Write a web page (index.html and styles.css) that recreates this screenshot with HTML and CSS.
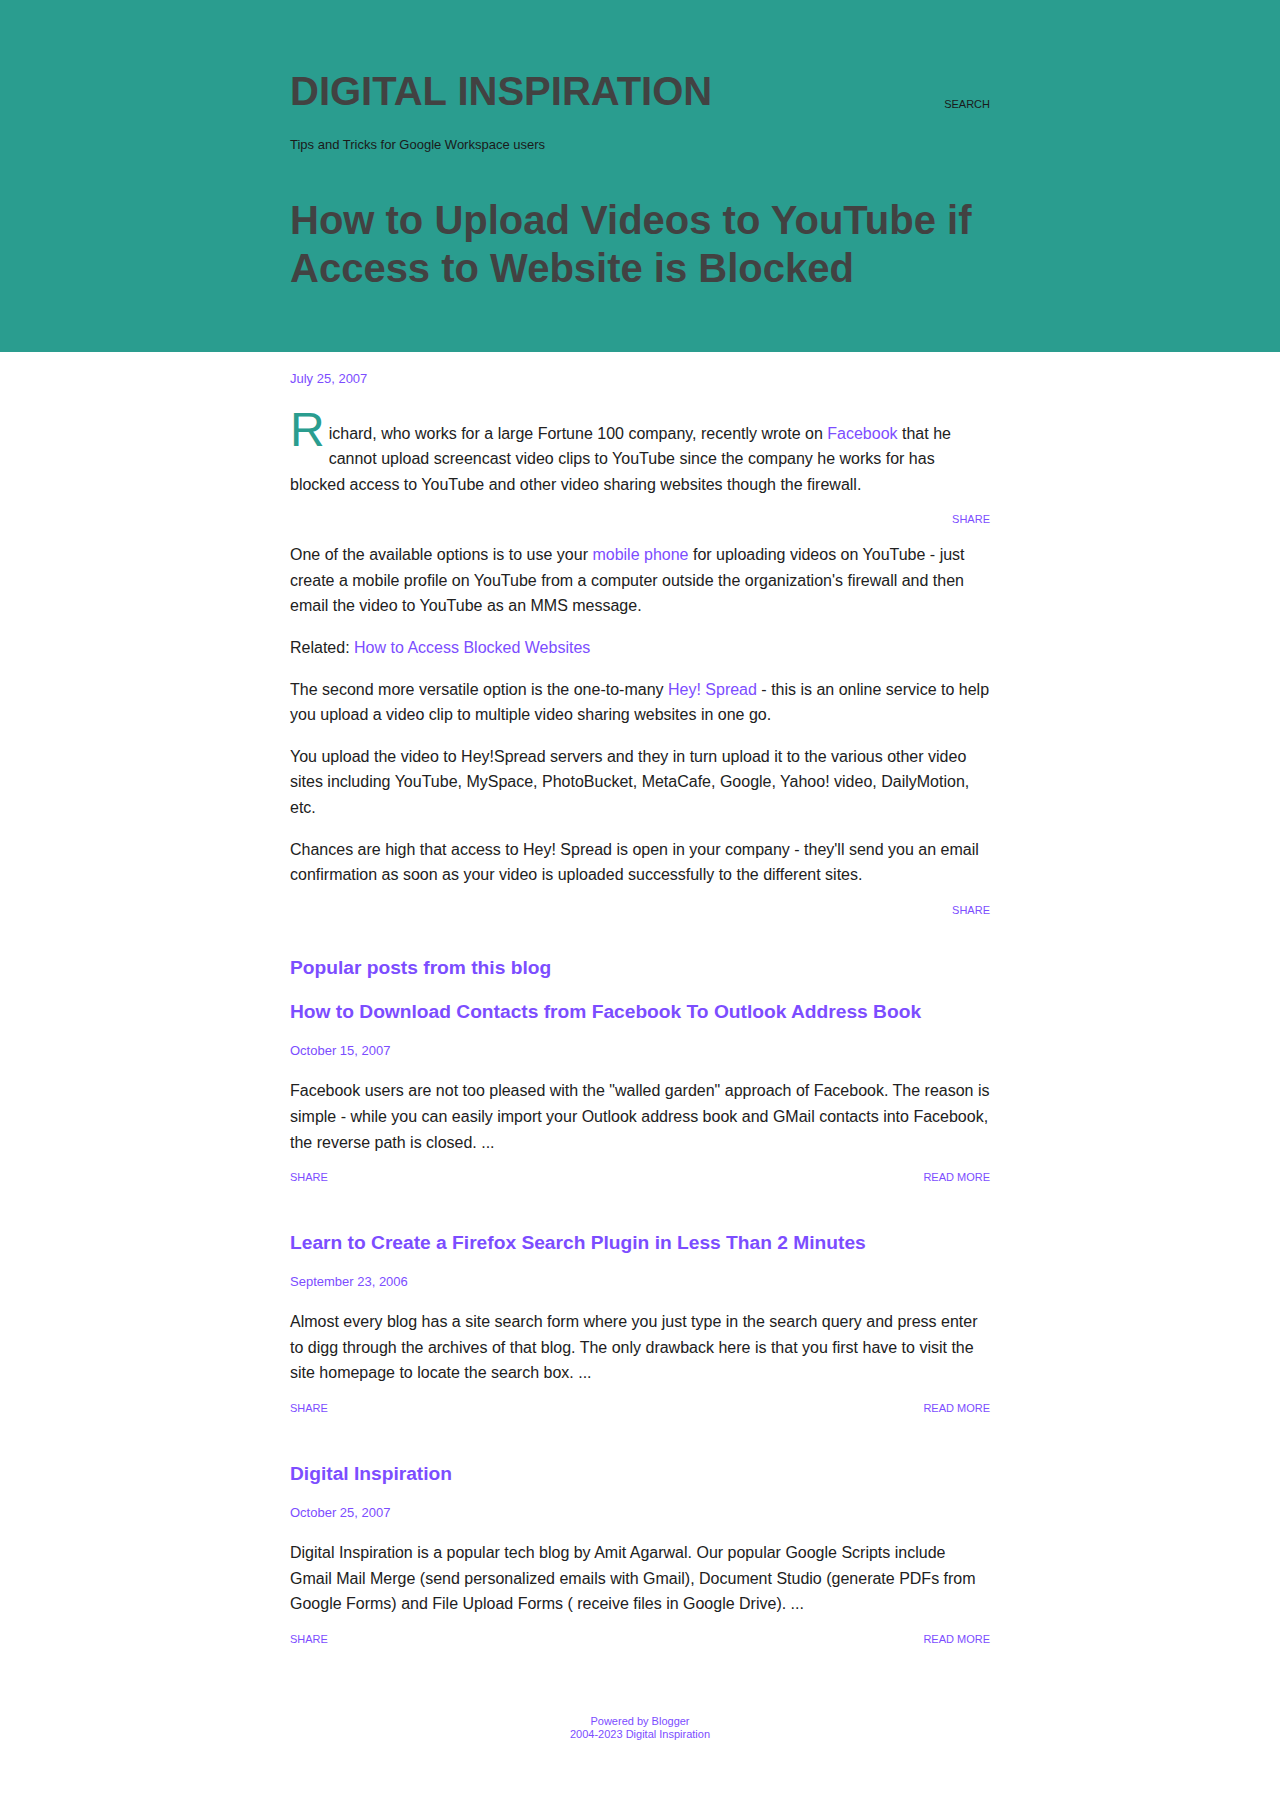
FILE: index.html
```html
<!DOCTYPE html>
<html lang="en">
<head>
<meta charset="utf-8">
<title>How to Upload Videos to YouTube if Access to Website is Blocked</title>
<link rel="stylesheet" href="styles.css">
</head>
<body>
<header class="masthead">
  <div class="wrap">
    <div class="brand-row">
      <h1 class="blog-title">DIGITAL INSPIRATION</h1>
      <a class="search" href="#">SEARCH</a>
    </div>
    <div class="tagline">Tips and Tricks for Google Workspace users</div>
    <h2 class="post-title">How to Upload Videos to YouTube if Access to Website is Blocked</h2>
  </div>
</header>

<main class="wrap content">
  <article class="post">
    <div class="date date-main">July 25, 2007</div>
    <p><span class="dropcap">R</span>ichard, who works for a large Fortune 100 company, recently wrote on <a href="#">Facebook</a> that he cannot upload screencast video clips to YouTube since the company he works for has blocked access to YouTube and other video sharing websites though the firewall.</p>
    <div class="share-row"><a href="#">SHARE</a></div>
    <p>One of the available options is to use your <a href="#">mobile phone</a> for uploading videos on YouTube - just create a mobile profile on YouTube from a computer outside the organization's firewall and then email the video to YouTube as an MMS message.</p>
    <p>Related: <a href="#">How to Access Blocked Websites</a></p>
    <p>The second more versatile option is the one-to-many <a href="#">Hey! Spread</a> - this is an online service to help you upload a video clip to multiple video sharing websites in one go.</p>
    <p>You upload the video to Hey!Spread servers and they in turn upload it to the various other video sites including YouTube, MySpace, PhotoBucket, MetaCafe, Google, Yahoo! video, DailyMotion, etc.</p>
    <p>Chances are high that access to Hey! Spread is open in your company - they'll send you an email confirmation as soon as your video is uploaded successfully to the different sites.</p>
    <div class="share-row share-end"><a href="#">SHARE</a></div>
  </article>

  <section class="popular">
    <h3 class="popular-heading">Popular posts from this blog</h3>

    <div class="snippet">
      <h4 class="snippet-title"><a href="#">How to Download Contacts from Facebook To Outlook Address Book</a></h4>
      <div class="date snippet-date">October 15, 2007</div>
      <p class="snippet-text">Facebook users are not too pleased with the "walled garden" approach of Facebook. The reason is simple - while you can easily import your Outlook address book and GMail contacts into Facebook, the reverse path is closed. ...</p>
      <div class="actions"><a href="#">SHARE</a><a href="#">READ MORE</a></div>
    </div>

    <div class="snippet">
      <h4 class="snippet-title"><a href="#">Learn to Create a Firefox Search Plugin in Less Than 2 Minutes</a></h4>
      <div class="date snippet-date">September 23, 2006</div>
      <p class="snippet-text">Almost every blog has a site search form where you just type in the search query and press enter to digg through the archives of that blog. The only drawback here is that you first have to visit the site homepage to locate the search box. ...</p>
      <div class="actions"><a href="#">SHARE</a><a href="#">READ MORE</a></div>
    </div>

    <div class="snippet">
      <h4 class="snippet-title"><a href="#">Digital Inspiration</a></h4>
      <div class="date snippet-date">October 25, 2007</div>
      <p class="snippet-text">Digital Inspiration is a popular tech blog by Amit Agarwal. Our popular Google Scripts include Gmail Mail Merge (send personalized emails with Gmail), Document Studio (generate PDFs from Google Forms) and File Upload Forms ( receive files in Google Drive). ...</p>
      <div class="actions"><a href="#">SHARE</a><a href="#">READ MORE</a></div>
    </div>
  </section>
</main>

<footer class="site-footer">
  <div><a href="#">Powered by Blogger</a></div>
  <div>2004-2023 Digital Inspiration</div>
</footer>
</body>
</html>
```

FILE: styles.css
```css
html, body {
  margin: 0;
  padding: 0;
  background: #ffffff;
}

body {
  font-family: "Liberation Sans", Arial, Helvetica, sans-serif;
  color: #212121;
}

a {
  color: #7c4dff;
  text-decoration: none;
}

.wrap {
  width: 700px;
  margin: 0 auto;
}

/* Header */
.masthead {
  background: #2a9d8f;
  padding: 67px 0 60px;
}

.brand-row {
  display: flex;
  justify-content: space-between;
  align-items: flex-start;
}

.blog-title {
  margin: 0;
  font-size: 40px;
  line-height: 48px;
  font-weight: 700;
  color: #424242;
}

.search {
  margin-top: 31px;
  font-size: 11px;
  line-height: 13px;
  color: #1a1a1a;
}

.tagline {
  margin-top: 21px;
  font-size: 13px;
  line-height: 18px;
  color: #1a1a1a;
}

.post-title {
  margin: 41.5px 0 0;
  font-size: 40px;
  line-height: 48px;
  font-weight: 700;
  color: #424242;
}

/* Content */
.content {
  padding-top: 18.5px;
}

.date {
  font-size: 13px;
  line-height: 18px;
  color: #7c4dff;
}

.date-main {
  margin-bottom: 32.5px;
}

.post p {
  margin: 0 0 16px;
  font-size: 16px;
  line-height: 25.6px;
}

.dropcap {
  float: left;
  font-size: 48px;
  line-height: 48px;
  margin: -15px 4px 0 0;
  color: #2a9d8f;
}

.share-row {
  text-align: right;
  font-size: 11px;
  line-height: 13px;
  margin: 0 0 16px;
}

.share-end {
  margin-bottom: 0;
}

/* Popular posts */
.popular-heading {
  margin: 39px 0 0;
  font-size: 19.2px;
  line-height: 23px;
  font-weight: 700;
  color: #7c4dff;
}

.snippet-title {
  margin: 21px 0 0;
  font-size: 19.2px;
  line-height: 23px;
  font-weight: 700;
}

.snippet + .snippet .snippet-title {
  margin-top: 46.5px;
}

.snippet-date {
  margin-top: 19.4px;
}

.snippet-text {
  margin: 18.2px 0 0;
  font-size: 16px;
  line-height: 25.6px;
}

.actions {
  display: flex;
  justify-content: space-between;
  margin-top: 16px;
  font-size: 11px;
  line-height: 13px;
}

/* Footer */
.site-footer {
  margin-top: 69px;
  text-align: center;
  font-size: 11px;
  line-height: 12.7px;
  color: #7c4dff;
  padding-bottom: 54px;
}
```
